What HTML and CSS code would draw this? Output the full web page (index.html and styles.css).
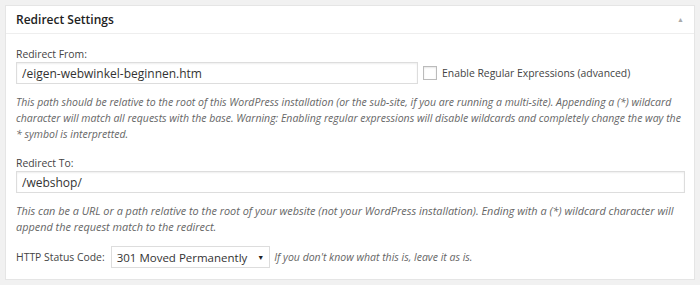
FILE: index.html
```html
<!DOCTYPE html>
<html lang="en">
<head>
    <meta charset="UTF-8">
    <title>Redirect Settings</title>
    <link rel="stylesheet" href="styles.css">
</head>
<body>
    <div class="postbox">
        <div class="postbox-header">
            <h3>Redirect Settings</h3>
            <span class="toggle">&#9650;</span>
        </div>
        <div class="inside">
            <label class="field-label">Redirect From:</label>
            <div class="row">
                <input class="text-input from-input" type="text" value="/eigen-webwinkel-beginnen.htm">
                <label class="checkbox-label"><span class="checkbox"></span>Enable Regular Expressions (advanced)</label>
            </div>
            <p class="description">This path should be relative to the root of this WordPress installation (or the sub-site, if you are running a multi-site). Appending a (*) wildcard character will match all requests with the base. Warning: Enabling regular expressions will disable wildcards and completely change the way the * symbol is interpretted.</p>

            <label class="field-label">Redirect To:</label>
            <input class="text-input to-input" type="text" value="/webshop/">
            <p class="description last">This can be a URL or a path relative to the root of your website (not your WordPress installation). Ending with a (*) wildcard character will append the request match to the redirect.</p>

            <div class="row">
                <span class="status-label">HTTP Status Code:</span>
                <div class="select">301 Moved Permanently <span class="arrow">&#9660;</span></div>
                <span class="hint">If you don't know what this is, leave it as is.</span>
            </div>
        </div>
    </div>
</body>
</html>
```

FILE: styles.css
```css
body {
    margin: 0;
    padding: 5px;
    background-color: #f1f1f1;
    font-family: 'Open Sans', sans-serif;
    color: #444;
}
.postbox {
    background-color: #fff;
    border: 1px solid #e5e5e5;
    height: 275px;
    box-sizing: border-box;
}
.postbox-header {
    display: flex;
    align-items: center;
    justify-content: space-between;
    height: 27px;
    padding: 0 10px;
    border-bottom: 1px solid #eee;
}
.postbox-header h3 {
    margin: 0;
    font-size: 12px;
    font-weight: 600;
    color: #222;
}
.toggle {
    font-size: 7px;
    color: #aaa;
}
.inside {
    padding: 12px 10px 0;
    font-size: 10.4px;
}
.field-label {
    display: block;
    line-height: 16px;
}
.row {
    display: flex;
    align-items: center;
}
.text-input {
    font-family: 'Open Sans', sans-serif;
    font-size: 12px;
    color: #333;
    height: 22px;
    box-sizing: border-box;
    border: 1px solid #ddd;
    box-shadow: inset 0 1px 2px rgba(0, 0, 0, 0.07);
    padding: 0 5px;
    margin: 0;
}
.from-input {
    width: 402px;
}
.to-input {
    display: block;
    width: 669px;
}
.checkbox-label {
    display: flex;
    align-items: center;
    margin-left: 5px;
}
.checkbox {
    width: 12px;
    height: 12px;
    border: 1px solid #bbb;
    margin-right: 5px;
    box-shadow: inset 0 1px 2px rgba(0, 0, 0, 0.1);
}
.description {
    margin: 10px -4px 13px 0;
    font-style: italic;
    font-size: 10.5px;
    line-height: 16px;
    color: #666;
}
.description.last {
    margin-right: 0;
    margin-bottom: 11px;
    font-size: 10.9px;
}
.status-label {
    margin-right: 6px;
}
.select {
    display: flex;
    align-items: center;
    height: 22px;
    box-sizing: border-box;
    border: 1px solid #ddd;
    padding: 0 5px;
    font-size: 11.5px;
    color: #333;
}
.arrow {
    font-size: 7px;
    color: #222;
    margin-left: 10px;
}
.hint {
    margin-left: 4px;
    font-style: italic;
    font-size: 10.5px;
    color: #666;
}
```
